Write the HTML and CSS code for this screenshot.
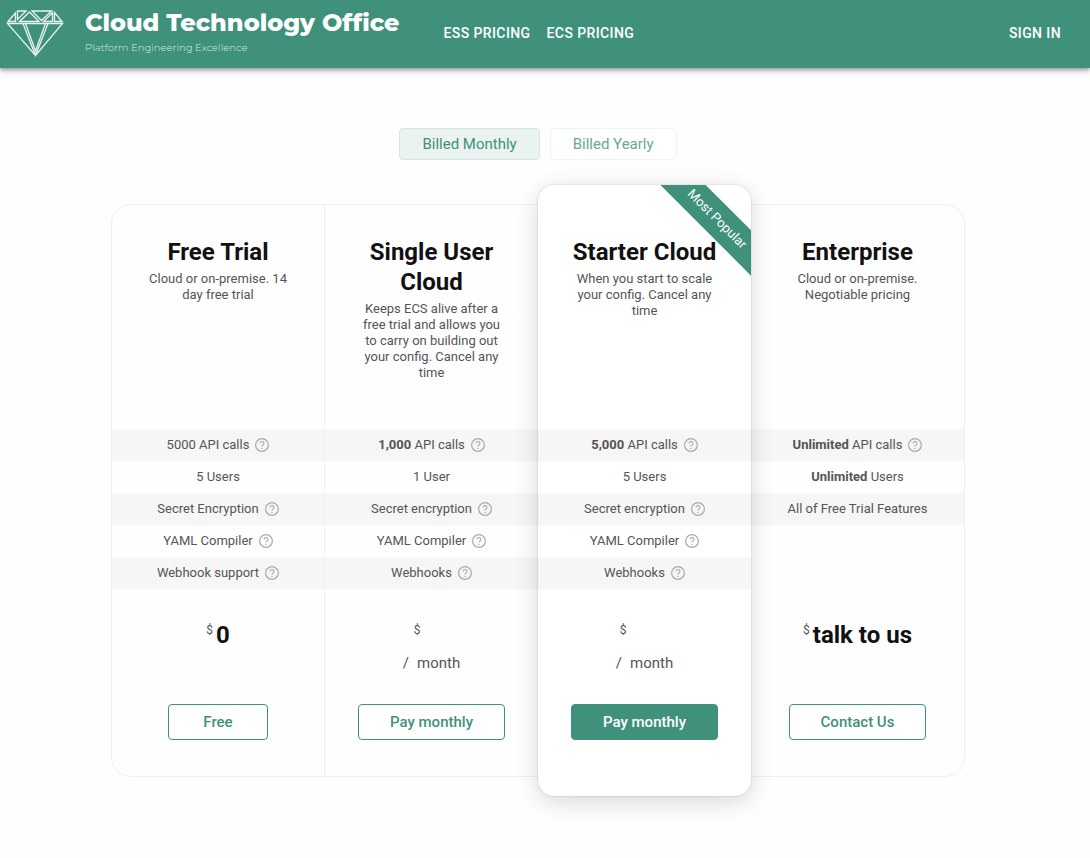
FILE: index.html
```html
<!DOCTYPE html>
<html lang="en">
<head>
<meta charset="utf-8">
<meta name="viewport" content="width=device-width, initial-scale=1">
<title>Cloud Technology Office</title>
<link rel="stylesheet" href="styles.css">
</head>
<body>
<svg class="sprite" aria-hidden="true">
  <symbol id="help" viewBox="0 0 14 14">
    <circle cx="7" cy="7" r="6.4" fill="none" stroke="currentColor" stroke-width="1.2"/>
    <path d="M5.1 5.4a1.9 1.9 0 1 1 2.9 1.6c-.7.4-1 .7-1 1.4" fill="none" stroke="currentColor" stroke-width="1.1"/>
    <circle cx="7" cy="10.4" r=".7" fill="currentColor"/>
  </symbol>
</svg>
<header class="topbar">
  <a class="brand" href="#">
    <svg class="gem" viewBox="0 0 58 47" aria-hidden="true">
      <path d="M2 11.500 9.500 3V11.500ZM11.500 1H20L11.500 9.500ZM13.500 11.500 23.500 2 33 11.500ZM26 1H45.500L35.500 10.500ZM46.500 2.500V11.500H37.500ZM48.500 2.500 56 11.500H48.500Z"/>
      <path d="M1.500 13.500H56.500L29.500 45.500ZM17 13.500 29.500 45.500 42 13.500M19.500 13.500 29.500 41 39.500 13.500"/>
    </svg>
    <span class="brand-text">
      <span class="brand-name">Cloud Technology Office</span>
      <span class="brand-tag">Platform Engineering Excellence</span>
    </span>
  </a>
  <nav class="nav">
    <a href="#">ESS PRICING</a>
    <a href="#">ECS PRICING</a>
  </nav>
  <a class="signin" href="#">SIGN IN</a>
</header>
<main class="page">
  <div class="billing">
    <button class="toggle active" type="button" aria-pressed="true">Billed Monthly</button>
    <button class="toggle" type="button" aria-pressed="false">Billed Yearly</button>
  </div>
  <section class="plans">
    <article class="plan">
      <div class="intro"><h2>Free Trial</h2><p>Cloud or on-premise. 14 day free trial</p></div>
      <ul class="features">
        <li>5000 API calls <svg class="help"><use href="#help"/></svg></li>
        <li>5 Users</li>
        <li>Secret Encryption <svg class="help"><use href="#help"/></svg></li>
        <li>YAML Compiler <svg class="help"><use href="#help"/></svg></li>
        <li>Webhook support <svg class="help"><use href="#help"/></svg></li>
      </ul>
      <div class="price"><div class="amount"><span class="currency">$</span><strong>0</strong></div></div>
      <button class="buy" type="button">Free</button>
    </article>
    <article class="plan">
      <div class="intro"><h2>Single User Cloud</h2><p>Keeps ECS alive after a free trial and allows you to carry on building out your config. Cancel any time</p></div>
      <ul class="features">
        <li><span><b>1,000</b> API calls</span> <svg class="help"><use href="#help"/></svg></li>
        <li>1 User</li>
        <li>Secret encryption <svg class="help"><use href="#help"/></svg></li>
        <li>YAML Compiler <svg class="help"><use href="#help"/></svg></li>
        <li>Webhooks <svg class="help"><use href="#help"/></svg></li>
      </ul>
      <div class="price"><div class="amount"><span class="currency">$</span><strong class="blank"></strong></div><div class="period"><span>/</span><span>month</span></div></div>
      <button class="buy" type="button">Pay monthly</button>
    </article>
    <article class="plan featured">
      <div class="corner"><span class="ribbon">Most Popular</span></div>
      <div class="intro"><h2>Starter Cloud</h2><p>When you start to scale your config. Cancel any time</p></div>
      <ul class="features">
        <li><span><b>5,000</b> API calls</span> <svg class="help"><use href="#help"/></svg></li>
        <li>5 Users</li>
        <li>Secret encryption <svg class="help"><use href="#help"/></svg></li>
        <li>YAML Compiler <svg class="help"><use href="#help"/></svg></li>
        <li>Webhooks <svg class="help"><use href="#help"/></svg></li>
      </ul>
      <div class="price"><div class="amount"><span class="currency">$</span><strong class="blank wide"></strong></div><div class="period"><span>/</span><span>month</span></div></div>
      <button class="buy primary" type="button">Pay monthly</button>
    </article>
    <article class="plan">
      <div class="intro"><h2>Enterprise</h2><p>Cloud or on-premise. Negotiable pricing</p></div>
      <ul class="features">
        <li><span><b>Unlimited</b> API calls</span> <svg class="help"><use href="#help"/></svg></li>
        <li><span><b>Unlimited</b> Users</span></li>
        <li>All of Free Trial Features</li>
      </ul>
      <div class="price"><div class="amount"><span class="currency">$</span><strong>talk to us</strong></div></div>
      <button class="buy" type="button">Contact Us</button>
    </article>
  </section>
</main>
</body>
</html>
```
FILE: styles.css
```css
:root {
  --green: #3f917c;
  --line: #f0f0f0;
}
* { box-sizing: border-box; }
body {
  margin: 0;
  background: #fefefe;
  color: #555;
  font: 13px/16px Roboto, "Liberation Sans", sans-serif;
}
a { color: inherit; text-decoration: none; }
button { font-family: inherit; cursor: pointer; }
.sprite { display: none; }

.topbar {
  display: flex;
  align-items: center;
  height: 68px;
  padding: 0 29px 2px 6px;
  background: var(--green);
  color: #fff;
  box-shadow: 0 2px 4px rgba(0, 0, 0, .35), 0 4px 8px rgba(0, 0, 0, .1);
}
.brand { display: flex; align-items: center; gap: 21px; }
.gem {
  width: 58px;
  height: 47px;
  fill: none;
  stroke: #e9f4f1;
  stroke-width: 1.300;
}
.brand-text { display: flex; flex-direction: column; padding-bottom: 2px; white-space: nowrap; }
.brand-name { font: 800 24px/32px Montserrat, Inter, sans-serif; font-variant-ligatures: none; }
.brand-tag { font: 300 10px/18px Montserrat, Inter, sans-serif; color: #d5e9e3; }
.nav { display: flex; gap: 16px; margin-left: 44px; }
.nav a, .signin {
  font-size: 14px;
  font-weight: 500;
  letter-spacing: .4px;
  white-space: nowrap;
}
.signin { margin-left: auto; }

.page { padding: 60px 125px 62px 111px; }
.billing { display: flex; justify-content: center; gap: 10px; }
.toggle {
  height: 32px;
  padding: 0 22px;
  border: 1px solid #edf5f3;
  border-radius: 4px;
  background: #fff;
  color: #68a997;
  font-size: 15px;
}
.toggle.active { border-color: #d5e7e2; background: #ebf3f1; color: var(--green); }

.plans {
  display: grid;
  grid-template-columns: repeat(4, 1fr);
  max-width: 854px;
  margin: 44px auto 0;
  border: 1px solid var(--line);
  border-radius: 20px;
}
.plan {
  display: flex;
  flex-direction: column;
  align-items: center;
  padding: 32px 0 36px;
  text-align: center;
}
.plan:first-child { border-right: 1px solid var(--line); }
.featured {
  position: relative;
  margin: -20px 0;
  padding: 52px 0 56px;
  border-radius: 16px;
  background: #fff;
  box-shadow: 0 0 2px rgba(0, 0, 0, .2), 0 6px 24px rgba(0, 0, 0, .15);
}
.intro { min-height: 192px; padding: 0 32px; }
.plan h2 { margin: 0 0 4px; color: #111; font-size: 24px; line-height: 30px; font-weight: 700; }
.plan p { margin: 0 auto; max-width: 142px; }
.features {
  align-self: stretch;
  min-height: 160px;
  margin: 0;
  padding: 0;
  list-style: none;
}
.features li {
  display: flex;
  align-items: center;
  justify-content: center;
  gap: 6px;
  height: 32px;
}
.features li:nth-child(odd) { background: #f6f6f6; }
.help { width: 14px; height: 14px; color: #aaa; }
.price { height: 115px; padding-top: 31px; }
.amount { display: flex; justify-content: center; gap: 3px; height: 30px; }
.amount strong { color: #111; font-size: 24px; line-height: 30px; }
.amount .blank { width: 26px; }
.amount .wide { width: 40px; }
.currency { font-size: 12px; line-height: 20px; }
.period { display: flex; justify-content: center; gap: 8px; padding-top: 4px; font-size: 15px; line-height: 18px; }
.buy {
  min-width: 100px;
  height: 36px;
  padding: 0 31px;
  border: 1px solid var(--green);
  border-radius: 4px;
  background: #fff;
  color: var(--green);
  font-size: 15px;
  font-weight: 500;
}
.buy.primary { background: var(--green); color: #fff; }

.corner {
  position: absolute;
  inset: 0;
  overflow: hidden;
  border-radius: 16px;
  pointer-events: none;
}
.ribbon {
  position: absolute;
  top: 18px;
  right: -37px;
  width: 142px;
  background: var(--green);
  color: #fff;
  font-size: 13px;
  line-height: 32px;
  transform: rotate(45deg);
}
```
